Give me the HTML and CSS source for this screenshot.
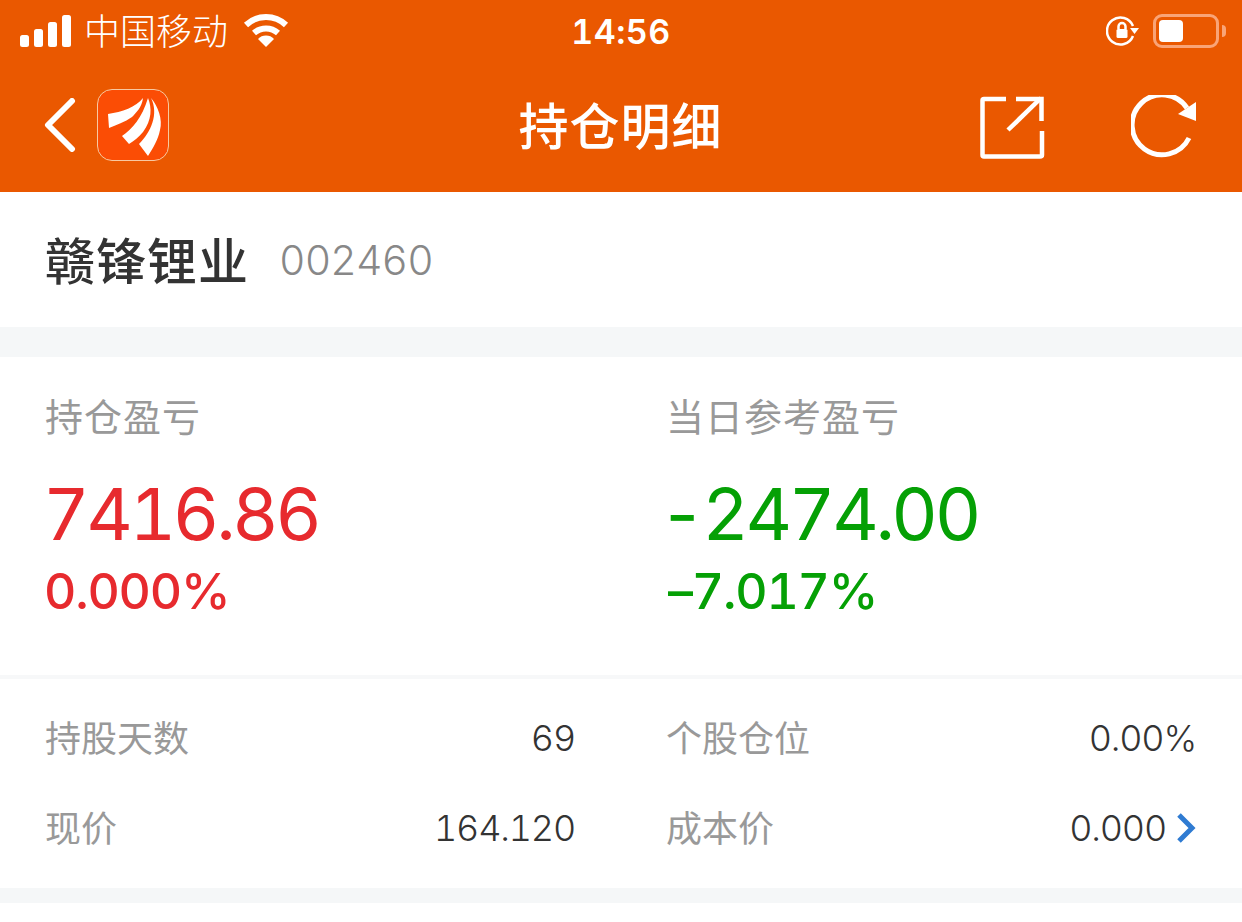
FILE: index.html
```html
<!DOCTYPE html>
<html lang="zh">
<head>
    <meta charset="UTF-8" />
    <title>持仓明细</title>
    <link rel="stylesheet" href="styles.css">
</head>
<body>

    <header class="top">
        <div class="status">
            <div class="status-left">
                <svg class="signal" width="52" height="32" viewBox="0 0 52 32">
                    <rect x="0" y="20" width="9" height="12" rx="2.5" />
                    <rect x="14" y="14" width="9" height="18" rx="2.5" />
                    <rect x="28" y="7" width="9" height="25" rx="2.5" />
                    <rect x="42" y="0" width="9" height="32" rx="2.5" />
                </svg>
                <span class="carrier">中国移动</span>
                <svg class="wifi" width="46" height="34" viewBox="0 0 46 34">
                    <path d="M3 11 A29 29 0 0 1 43 11" />
                    <path d="M11 19 A18 18 0 0 1 35 19" />
                    <path class="wifi-dot" d="M23 33 L15 25 A11 11 0 0 1 31 25 Z" />
                </svg>
            </div>
            <span class="clock">14:56</span>
            <div class="status-right">
                <svg class="lock" width="34" height="32" viewBox="0 0 34 32">
                    <path d="M27 21 A13.5 13.5 0 1 1 27 11" />
                    <path class="solid" d="M24 13 L33 13 L28.500 19 Z" />
                    <rect class="solid" x="10.500" y="14" width="11" height="9" rx="1.500" />
                    <path class="thin" d="M12.500 14 V11.500 A3.500 3.500 0 0 1 19.500 11.500 V14" />
                </svg>
                <div class="battery"><div class="battery-fill"></div></div>
                <div class="battery-cap"></div>
            </div>
        </div>
        <nav class="nav">
            <div class="nav-left">
                <svg class="back" width="32" height="54" viewBox="0 0 32 54">
                    <path d="M28 3 L4 27 L28 51" />
                </svg>
                <div class="logo">
                    <svg width="70" height="70" viewBox="0 0 70 70">
                        <path d="M10 24 C24 22 38 17 45 8 C44 17 38 23 34 27 C27 32 18 35 11 38 Z" />
                        <path d="M24 46 C34 39 44 28 50 8 C54 18 54 30 45 42 C41 47 36 51 31 54 Z" />
                        <path d="M41 54 C53 42 61 24 53 8 C60 16 65 30 62 40 C60 50 55 58 50 66 Z" />
                    </svg>
                </div>
            </div>
            <h1>持仓明细</h1>
            <div class="nav-right">
                <svg class="share" width="66" height="66" viewBox="0 0 66 66">
                    <path d="M26 4 H4 Q2.500 4 2.500 5.500 V60 Q2.500 61.500 4 61.500 H60 Q62 61.500 62 60 V36" />
                    <path d="M28 35 L61 3" />
                    <path d="M36 4 H61.500 V26" />
                </svg>
                <svg class="refresh" width="66" height="66" viewBox="0 0 66 66">
                    <path class="ring" d="M58 43 A30 30 0 1 1 56 13" />
                    <path class="arrow" d="M47 19 L65 7 V26 Z" />
                </svg>
            </div>
        </nav>
    </header>

    <section class="stock">
        <span class="stock-name">赣锋锂业</span>
        <span class="stock-code">002460</span>
    </section>

    <section class="pnl">
        <div class="pnl-col">
            <div class="pnl-label">持仓盈亏</div>
            <div class="pnl-value up">7416.86</div>
            <div class="pnl-rate up">0.000%</div>
        </div>
        <div class="pnl-col">
            <div class="pnl-label">当日参考盈亏</div>
            <div class="pnl-value down">-2474.00</div>
            <div class="pnl-rate down">–7.017%</div>
        </div>
    </section>

    <section class="details">
        <div class="detail">
            <span class="detail-label">持股天数</span>
            <span class="detail-value">69</span>
        </div>
        <div class="detail">
            <span class="detail-label">个股仓位</span>
            <span class="detail-value">0.00%</span>
        </div>
        <div class="detail">
            <span class="detail-label">现价</span>
            <span class="detail-value">164.120</span>
        </div>
        <div class="detail">
            <span class="detail-label">成本价</span>
            <span class="detail-value">0.000
                <svg class="chevron" width="20" height="30" viewBox="0 0 20 30">
                    <path d="M3 2 L16 15 L3 28" />
                </svg>
            </span>
        </div>
    </section>

</body>
</html>
```

FILE: styles.css
```css
body {
    font-family: Inter, "Noto Sans CJK SC", sans-serif;
    font-variant-numeric: tabular-nums;
    margin: 0;
    padding: 0;
    background: white;
    color: #333;
    overflow: hidden;
}

.top {
    background-color: #ea5800;
    color: white;
    height: 192px;
}

.status {
    height: 62px;
    display: grid;
    grid-template-columns: 1fr auto 1fr;
    align-items: center;
    padding: 0 16px 0 20px;
}

.status-left {
    display: flex;
    align-items: center;
}

.signal {
    fill: white;
}

.carrier {
    font-size: 36px;
    font-weight: 300;
    margin-left: 12px;
    line-height: 40px;
    padding-top: 2px;
}

.wifi {
    margin-left: 15px;
    fill: none;
    stroke: white;
    stroke-width: 6;
}

.wifi-dot {
    fill: white;
    stroke: none;
}

.clock {
    font-size: 34px;
    font-weight: 600;
    letter-spacing: 0.500px;
    padding-right: 4px;
}

.status-right {
    display: flex;
    align-items: center;
    justify-content: flex-end;
}

.lock {
    fill: none;
    stroke: white;
    stroke-width: 2.500;
}

.lock .solid {
    fill: white;
    stroke: none;
}

.battery {
    width: 66px;
    height: 34px;
    box-sizing: border-box;
    border: 3px solid #f9a477;
    border-radius: 9px;
    padding: 3px;
    margin-left: 13px;
}

.battery-fill {
    width: 24px;
    height: 22px;
    background: white;
    border-radius: 4px;
}

.battery-cap {
    width: 4px;
    height: 12px;
    background: #f9a477;
    border-radius: 0 4px 4px 0;
    margin-left: 3px;
}

.nav {
    height: 126px;
    display: grid;
    grid-template-columns: 1fr auto 1fr;
    align-items: center;
    padding: 0 45px 4px 44px;
}

.nav-left {
    display: flex;
    align-items: center;
}

.back {
    fill: none;
    stroke: white;
    stroke-width: 6;
    stroke-linecap: round;
    stroke-linejoin: round;
}

.logo {
    width: 72px;
    height: 72px;
    box-sizing: border-box;
    margin-left: 21px;
    background: #fb4d05;
    border: 1px solid #f8c9a0;
    border-radius: 15px;
    fill: white;
}

.logo svg {
    display: block;
}

h1 {
    margin: 0 0 4px;
    font-size: 50px;
    font-weight: 500;
    letter-spacing: 1px;
}

.nav-right {
    display: flex;
    align-items: center;
    justify-content: flex-end;
    gap: 85px;
    margin-top: 6px;
}

.share {
    fill: none;
    stroke: white;
    stroke-width: 4.500;
}

.refresh .ring {
    fill: none;
    stroke: white;
    stroke-width: 5;
}

.refresh .arrow {
    fill: white;
}

.stock {
    height: 135px;
    display: flex;
    align-items: center;
    padding: 0 45px;
    border-bottom: 30px solid #f5f7f8;
}

.stock-name {
    font-size: 50px;
    font-weight: 500;
    letter-spacing: 1px;
    padding-bottom: 3px;
}

.stock-code {
    font-size: 41px;
    font-weight: 300;
    color: #888;
    margin-left: 30px;
    letter-spacing: -0.900px;
}

.pnl {
    height: 318px;
    display: grid;
    grid-template-columns: 621px 1fr;
    padding-left: 45px;
    border-bottom: 4px solid #f7f8f9;
}

.pnl-label {
    font-size: 38px;
    color: #999;
    margin-top: 35px;
    line-height: 50px;
    letter-spacing: 1px;
}

.pnl-value {
    font-size: 72px;
    line-height: 90px;
    margin-top: 27px;
    letter-spacing: -3.400px;
}

.pnl-rate {
    font-size: 50px;
    font-weight: 500;
    line-height: 60px;
    margin-top: 2px;
    letter-spacing: -1.200px;
}

.pnl-value.up {
    margin-left: -2px;
}

.pnl-rate.up {
    margin-left: -1px;
}

.pnl-value.down {
    margin-left: -7px;
}

.pnl-rate.down {
    margin-left: 2px;
}

.up {
    color: #e72a2e;
}

.down {
    color: #05a005;
}

.details {
    height: 195px;
    display: grid;
    grid-template-columns: 530px 530px;
    column-gap: 91px;
    grid-auto-rows: 90px;
    padding: 14px 45px 0;
    border-bottom: 15px solid #f5f7f8;
}

.detail {
    display: flex;
    justify-content: space-between;
    align-items: center;
}

.detail-label {
    font-size: 36px;
    color: #999;
    padding-bottom: 4px;
}

.detail-value {
    font-size: 36px;
    font-weight: 300;
    letter-spacing: -1.200px;
    display: flex;
    align-items: center;
}

.chevron {
    fill: none;
    stroke: #2f7bd2;
    stroke-width: 5;
    margin-left: 10px;
}
```
